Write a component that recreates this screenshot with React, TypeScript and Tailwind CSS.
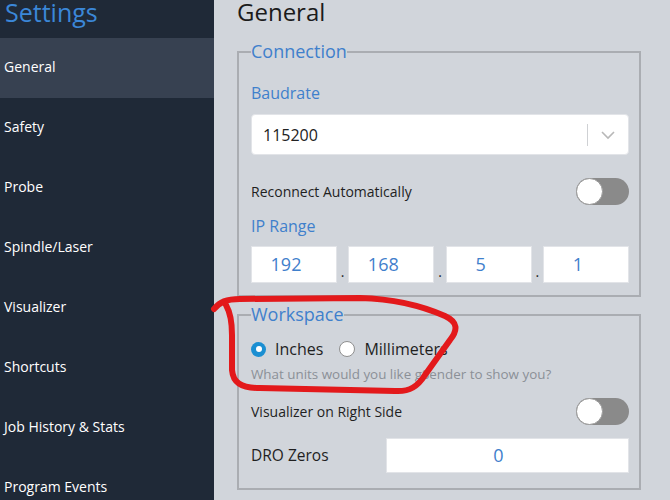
import React from "react";

const NAV = [
  "General",
  "Safety",
  "Probe",
  "Spindle/Laser",
  "Visualizer",
  "Shortcuts",
  "Job History & Stats",
  "Program Events",
];

function Toggle() {
  return (
    <div className="flex items-center w-[53px] h-[27px] rounded-full bg-[#8a8a8a]">
      <div className="w-[27px] h-[27px] rounded-full bg-white border border-[#9a9a9a]" />
    </div>
  );
}

function Radio({ checked }: { checked?: boolean }) {
  return checked ? (
    <span className="flex shrink-0 items-center justify-center w-[15px] h-[15px] rounded-full bg-[#1b8fd2]">
      <span className="w-[6px] h-[6px] rounded-full bg-white" />
    </span>
  ) : (
    <span className="block shrink-0 w-[16px] h-[16px] rounded-full bg-white border border-[#8f8f8f]" />
  );
}

export default function App() {
  return (
    <div
      className="relative flex w-[670px] h-[500px] overflow-hidden bg-[#d1d5db]"
      style={{ fontFamily: '"Open Sans", "Liberation Sans", sans-serif' }}
    >
      {/* Sidebar */}
      <aside className="w-[214px] shrink-0 bg-[#1f2937] text-white">
        <div className="h-[38px] overflow-hidden pl-[5px]">
          <div className="-mt-[6px] text-[25px] leading-normal text-[#3b87d8]">Settings</div>
        </div>
        {NAV.map((item, idx) => (
          <div
            key={item}
            className={`h-[60px] flex items-center pl-[4px] pb-[4px] text-[14px] ${idx === 0 ? "bg-[#374151]" : ""}`}
          >
            {item}
          </div>
        ))}
      </aside>

      {/* Main */}
      <main className="flex-1 pl-[23px] pr-[29px]">
        <div className="h-[44px]">
          <h1 className="-mt-[6px] text-[24px] leading-normal text-[#1b1b1b]">General</h1>
        </div>

        <fieldset className="border-2 border-[#aaadb2] pl-[12px] pr-[10px] pb-[12px]">
          <legend className="text-[18px] leading-normal text-[#3f80cc]">Connection</legend>
          <div className="mt-[16px] text-[16px] leading-normal text-[#3f80cc]">Baudrate</div>
          <div className="mt-[9px] h-[41px] flex items-center bg-white rounded-[4px] border border-[#e2e4e8]">
            <span className="flex-1 pl-[11px] text-[16px] text-[#222]">115200</span>
            <span className="w-px h-[22px] bg-[#cfd1d4]" />
            <svg width="40" height="20" viewBox="0 0 40 20" className="text-[#b8b8b8]">
              <path d="M14 7 L20 13 L26 7" fill="none" stroke="currentColor" strokeWidth="1.6" />
            </svg>
          </div>
          <div className="mt-[23px] flex items-center justify-between">
            <span className="text-[14px] text-[#1f1f1f]">Reconnect Automatically</span>
            <Toggle />
          </div>
          <div className="mt-[9px] text-[16px] leading-normal text-[#3f80cc]">IP Range</div>
          <div className="mt-[8px] flex items-end justify-between">
            {["192", "168", "5", "1"].map((v, i) => (
              <React.Fragment key={i}>
                {i > 0 && <span className="w-[11px] text-center text-[14px] leading-[22px] text-[#222]">.</span>}
                <div className="w-[86px] h-[37px] flex items-center justify-center pr-[16px] bg-white border border-[#e2e4e8] text-[18px] text-[#3f80cc]">
                  {v}
                </div>
              </React.Fragment>
            ))}
          </div>
        </fieldset>

        <fieldset className="mt-[4px] border-2 border-[#aaadb2] pl-[12px] pr-[10px] pb-[15px]">
          <legend className="text-[18px] leading-normal text-[#3f80cc]">Workspace</legend>
          <div className="mt-[9px] flex items-center text-[16px] leading-normal text-[#1f1f1f]">
            <Radio checked />
            <span className="ml-[9px]">Inches</span>
            <span className="ml-[16px]"><Radio /></span>
            <span className="ml-[9px]">Millimeters</span>
          </div>
          <div className="mt-[3px] text-[13.4px] leading-normal text-[#8b9097]">
            What units would you like gSender to show you?
          </div>
          <div className="mt-[14px] flex items-center justify-between">
            <span className="text-[14px] text-[#1f1f1f]">Visualizer on Right Side</span>
            <Toggle />
          </div>
          <div className="mt-[13px] flex items-center justify-between">
            <span className="text-[15.5px] text-[#1f1f1f]">DRO Zeros</span>
            <div className="w-[243px] h-[35px] flex items-center justify-center pr-[18px] bg-white border border-[#e2e4e8] text-[18px] text-[#3f80cc]">
              0
            </div>
          </div>
        </fieldset>
      </main>

      {/* red hand-drawn annotation */}
      <svg
        className="absolute inset-0 pointer-events-none"
        width="670"
        height="500"
        viewBox="0 0 670 500"
      >
        <path
          d="M214 309 C220 302 226 299 240 299 L360 298 C395 299 420 305 445 316 C458 322 458 330 450 340 L425 375 C418 386 410 392 395 391 L260 388 C240 388 233 382 232 370 L232 335 C232 320 230 312 226 305"
          fill="none"
          stroke="#e3191b"
          strokeWidth="6"
          strokeLinecap="round"
          strokeLinejoin="round"
        />
      </svg>
    </div>
  );
}
